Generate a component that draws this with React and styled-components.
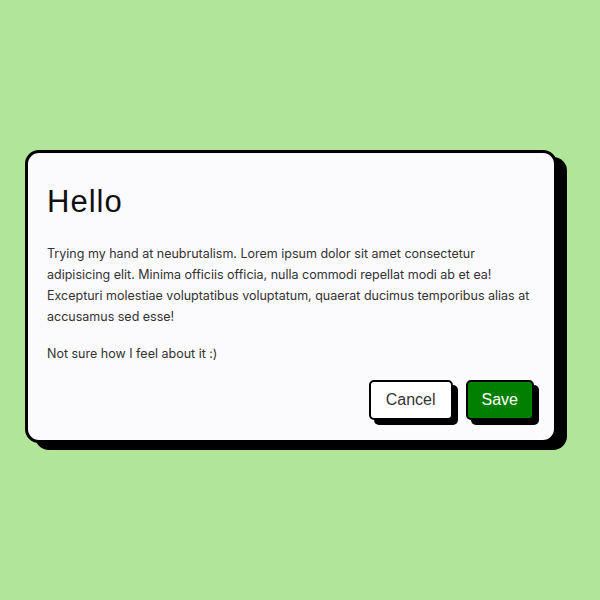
import React from "react";
import styled, { createGlobalStyle } from "styled-components";

const GlobalStyle = createGlobalStyle`
   html, body {
      margin: 0;
      padding: 0;
      background: #b0e59a;
   }
   * {
      box-sizing: border-box;
   }
`;

const Page = styled.div`
   width: 600px;
   height: 600px;
   display: flex;
   align-items: center;
   justify-content: center;
   padding: 0 18px 0 0;
`;

const Card = styled.div`
   width: 532px;
   background: #fbfafd;
   border: 3px solid #000;
   border-radius: 14px;
   box-shadow: 10px 7px 0 #000;
   padding: 31px 20px 20px 19px;
   margin-bottom: 8px;
`;

const Title = styled.h1`
   font-family: "Liberation Sans", Arial, sans-serif;
   font-weight: 400;
   font-size: 31px;
   letter-spacing: 1px;
   color: #111;
   margin: 0 0 23px;
`;

const Text = styled.p`
   font-family: Inter, "Noto Sans", sans-serif;
   font-size: 12.5px;
   line-height: 21px;
   color: #333;
   margin: 0 0 16px;
`;

const Actions = styled.div`
   display: flex;
   justify-content: flex-end;
   gap: 13px;
   margin-top: 3px;
`;

const Button = styled.button`
   font-family: "Liberation Sans", Arial, sans-serif;
   font-size: 16px;
   height: 40px;
   padding: 0 ${p => (p.$primary ? "14px" : "15px")};
   border: 2px solid #000;
   border-radius: 5px;
   background: ${p => (p.$primary ? "#007f00" : "#fff")};
   color: ${p => (p.$primary ? "#fff" : "#333")};
   box-shadow: 5px 5px 0 #000;
   cursor: pointer;
`;

export default function App() {
   return (
      <>
         <GlobalStyle />
         <Page>
            <Card>
               <Title>Hello</Title>
               <Text>
                  Trying my hand at neubrutalism. Lorem ipsum dolor sit amet consectetur
                  adipisicing elit. Minima officiis officia, nulla commodi repellat modi ab et
                  ea! Excepturi molestiae voluptatibus voluptatum, quaerat ducimus temporibus
                  alias at accusamus sed esse!
               </Text>
               <Text>Not sure how I feel about it :)</Text>
               <Actions>
                  <Button>Cancel</Button>
                  <Button $primary>Save</Button>
               </Actions>
            </Card>
         </Page>
      </>
   );
}
